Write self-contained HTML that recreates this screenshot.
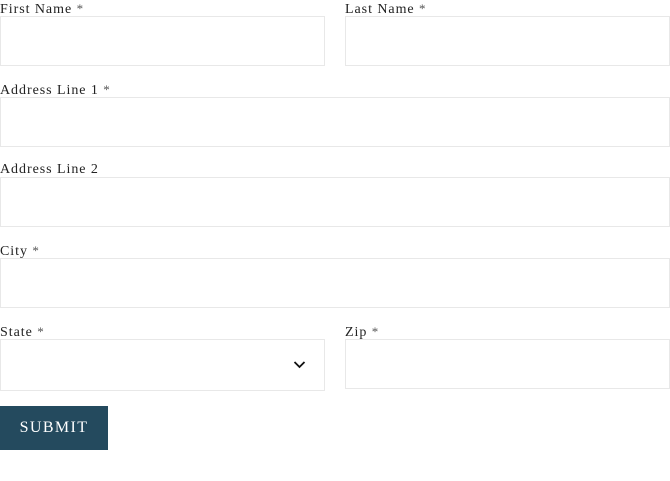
<!DOCTYPE html>
<html><head><style>
body{margin:0;width:670px;height:481px;background:#fff;position:relative;font-family:"Liberation Serif",serif;color:#222;overflow:hidden}
.l{position:absolute;font-size:14px;line-height:16px;letter-spacing:0.95px}
.l span{color:#555;font-size:13px}
.b{position:absolute;box-sizing:border-box;border:1px solid #e8e8e8;background:#fff}
.btn{position:absolute;left:0;top:406px;width:108px;height:44px;background:#244a5e;color:#fff;font-size:16px;letter-spacing:1.4px;line-height:44px;text-align:center}
</style></head><body>
<div class="l" style="left:0;top:1px">First Name <span>*</span></div>
<div class="l" style="left:345px;top:1px">Last Name <span>*</span></div>
<div class="b" style="left:0;top:16px;width:325px;height:50px"></div>
<div class="b" style="left:345px;top:16px;width:325px;height:50px"></div>
<div class="l" style="left:0;top:82px">Address Line 1 <span>*</span></div>
<div class="b" style="left:0;top:97px;width:670px;height:50px"></div>
<div class="l" style="left:0;top:162px">Address Line 2</div>
<div class="b" style="left:0;top:177px;width:670px;height:50px"></div>
<div class="l" style="left:0;top:243px">City <span>*</span></div>
<div class="b" style="left:0;top:258px;width:670px;height:50px"></div>
<div class="l" style="left:0;top:324px">State <span>*</span></div>
<div class="l" style="left:345px;top:324px">Zip <span>*</span></div>
<div class="b" style="left:0;top:339px;width:325px;height:52px"></div>
<svg style="position:absolute;left:293px;top:360px" width="13" height="9" viewBox="0 0 13 9"><path d="M1.5 2 L6.5 7 L11.5 2" fill="none" stroke="#111" stroke-width="1.8"/></svg>
<div class="b" style="left:345px;top:339px;width:325px;height:50px"></div>
<div class="btn">SUBMIT</div>
</body></html>
